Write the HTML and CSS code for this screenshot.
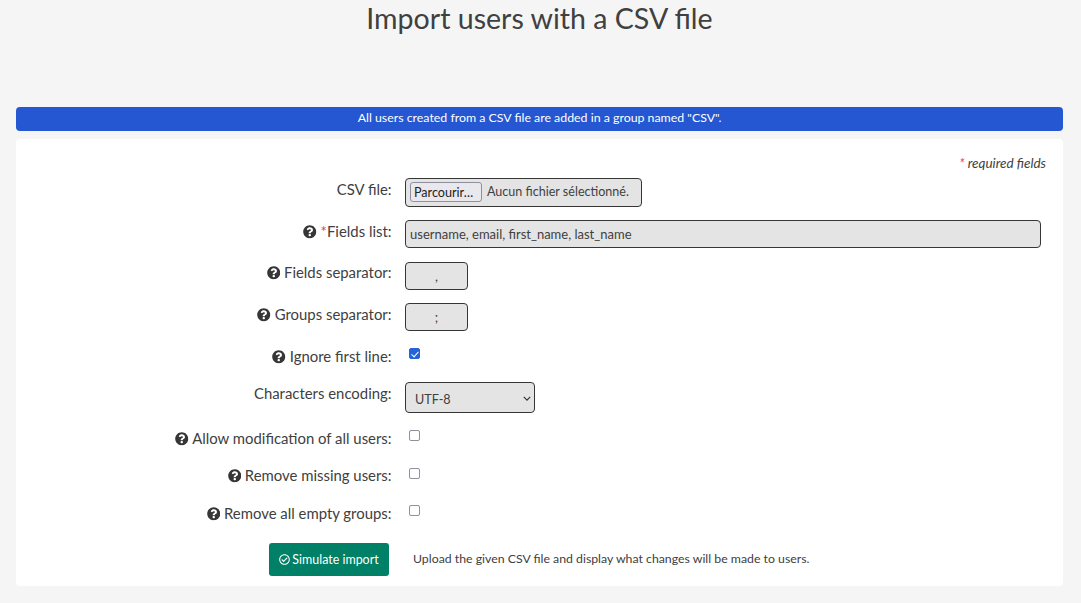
FILE: index.html
```html
<!DOCTYPE html>
<html lang="en">
<head>
<meta charset="utf-8">
<title>Import users with a CSV file</title>
<link rel="stylesheet" href="styles.css">
</head>
<body>
<svg class="sprite" width="0" height="0" aria-hidden="true">
  <symbol id="q" viewBox="0 0 512 512"><path fill="currentColor" d="M504 256c0 136.997-111.043 248-248 248S8 392.997 8 256C8 119.083 119.043 8 256 8s248 111.083 248 248zM262.655 90c-54.497 0-89.255 22.957-116.549 63.758-3.536 5.286-2.353 12.415 2.715 16.258l34.699 26.31c5.205 3.947 12.621 3.008 16.665-2.122 17.864-22.658 30.113-35.797 57.303-35.797 20.429 0 45.698 13.148 45.698 32.958 0 14.976-12.363 22.667-32.534 33.976C247.128 238.528 216 254.941 216 296v4c0 6.627 5.373 12 12 12h56c6.627 0 12-5.373 12-12v-1.333c0-28.462 83.186-29.647 83.186-106.667 0-58.002-60.165-102-116.531-102zM256 338c-25.365 0-46 20.635-46 46 0 25.364 20.635 46 46 46s46-20.636 46-46c0-25.365-20.635-46-46-46z"/></symbol>
</svg>
<h1 class="title">Import users with a CSV file</h1>
<div class="banner">All users created from a CSV file are added in a group named "CSV".</div>
<form class="panel">
  <p class="required"><span class="star">*</span> required fields</p>
  <div class="row row-file">
    <label class="label">CSV file:</label>
    <div class="file"><button type="button" class="file-btn">Parcourir…</button><span class="file-name">Aucun fichier sélectionné.</span></div>
  </div>
  <div class="row row-text">
    <label class="label"><svg class="help"><use href="#q"/></svg> <span class="star">*</span>Fields list:</label>
    <input class="input wide" type="text" value="username, email, first_name, last_name">
  </div>
  <div class="row row-fsep">
    <label class="label"><svg class="help"><use href="#q"/></svg> Fields separator:</label>
    <input class="input short" type="text" value=",">
  </div>
  <div class="row row-gsep">
    <label class="label"><svg class="help"><use href="#q"/></svg> Groups separator:</label>
    <input class="input short" type="text" value=";">
  </div>
  <div class="row first-check">
    <label class="label"><svg class="help"><use href="#q"/></svg> Ignore first line:</label>
    <input class="check" type="checkbox" checked>
  </div>
  <div class="row row-select">
    <label class="label">Characters encoding:</label>
    <div class="select-wrap">
      <select class="select"><option>UTF-8</option></select>
      <svg class="caret" viewBox="0 0 10 6"><path d="M1 1l4 4 4-4" fill="none" stroke="#333" stroke-width="1.5"/></svg>
    </div>
  </div>
  <div class="row c1">
    <label class="label"><svg class="help"><use href="#q"/></svg> Allow modification of all users:</label>
    <input class="check" type="checkbox">
  </div>
  <div class="row c2">
    <label class="label"><svg class="help"><use href="#q"/></svg> Remove missing users:</label>
    <input class="check" type="checkbox">
  </div>
  <div class="row c3">
    <label class="label"><svg class="help"><use href="#q"/></svg> Remove all empty groups:</label>
    <input class="check" type="checkbox">
  </div>
  <div class="row-submit">
    <button type="button" class="submit"><svg class="ok" viewBox="0 0 512 512"><path fill="currentColor" d="M256 8C119.033 8 8 119.033 8 256s111.033 248 248 248 248-111.033 248-248S392.967 8 256 8zm0 48c110.532 0 200 89.451 200 200 0 110.532-89.451 200-200 200-110.532 0-200-89.451-200-200 0-110.532 89.451-200 200-200m140.204 130.267l-22.536-22.718c-4.667-4.705-12.265-4.736-16.97-.068L215.346 303.697l-59.792-60.277c-4.667-4.705-12.265-4.736-16.97-.069l-22.719 22.536c-4.705 4.667-4.736 12.265-.068 16.971l90.781 91.516c4.667 4.705 12.265 4.736 16.97.068l172.589-171.204c4.704-4.668 4.734-12.266.067-16.971z"/></svg>Simulate import</button>
    <span class="hint">Upload the given CSV file and display what changes will be made to users.</span>
  </div>
</form>
</body>
</html>
```
FILE: styles.css
```css
* { box-sizing: border-box; }
html, body { margin: 0; padding: 0; }
body {
  background: #f5f5f5;
  color: #404040;
  font-family: Lato, "Liberation Sans", sans-serif;
  font-size: 15px;
  height: 603px;
  overflow: hidden;
  padding: 0 18px 0 16px;
}
.sprite { position: absolute; }
.title {
  margin: 0;
  height: 107px;
  text-align: center;
  font-size: 28.55px;
  line-height: 36px;
  font-weight: 400;
}
.banner {
  height: 24px;
  line-height: 22px;
  background: #2457d1;
  color: #fff;
  border-radius: 4px;
  text-align: center;
  font-size: 12.35px;
}
.panel {
  margin-top: 8px;
  background: #fff;
  border-radius: 4px;
  height: 447px;
  padding-top: 17px;
}
.required {
  margin: 0 17px 0 0;
  height: 22px;
  line-height: 15px;
  text-align: right;
  font-style: italic;
  font-size: 13.5px;
}
.star { color: #e0464b; }
.row { display: flex; align-items: flex-start; }
.label {
  width: 375.5px;
  text-align: right;
  flex: none;
  margin-right: 13.5px;
  line-height: 22px;
  font-size: 14.9px;
}
.help { width: 13.5px; height: 13.5px; vertical-align: -1.5px; color: #363636; }
.row-file { height: 42px; }
.row-text { height: 42px; }
.row-fsep { height: 41px; }
.row-fsep .label { line-height: 20px; }
.row-gsep { height: 41px; }
.first-check { height: 38px; }
.first-check .label { line-height: 24px; }
.row-select { height: 45px; }
.c1 { height: 38px; }
.c2 { height: 37px; }
.c2 .label { line-height: 20px; }
.c3 { height: 41px; }
.c1 .check, .c2 .check, .c3 .check { margin: 3px 0 0 4px; }
.first-check .check { margin: 4px 0 0 4px; }
.file {
  width: 237px;
  height: 29px;
  border: 1px solid #363636;
  border-radius: 4px;
  background: #e4e4e4;
  display: flex;
  align-items: flex-start;
  padding: 3px 0 0 4px;
  font-size: 12.55px;
}
.file-btn {
  font-family: inherit;
  font-size: 12.6px;
  height: 20px;
  width: 72px;
  padding: 0 0 0 3px;
  text-align: left;
  color: #222;
  background: #e9e9ed;
  border: 1px solid #8f8f9d;
  border-radius: 3px;
  margin-right: 5px;
}
.file-name { line-height: 20px; }
.input {
  height: 28px;
  border: 1px solid #363636;
  border-radius: 4px;
  background: #e4e4e4;
  color: #404040;
  font-family: inherit;
  font-size: 13px;
  padding: 0 4px 1px;
  outline: 0;
}
.wide { width: 636px; }
.short { width: 63px; text-align: center; }
.check {
  appearance: none;
  width: 11px;
  height: 11px;
  border: 1px solid #8f8f9d;
  border-radius: 2px;
  background: #fff;
  display: block;
}
.check:checked {
  background: #2563d8;
  border-color: #2563d8;
  position: relative;
}
.check:checked::after {
  content: "";
  position: absolute;
  left: 2.5px;
  top: .5px;
  width: 3px;
  height: 6px;
  border: solid #fff;
  border-width: 0 1.6px 1.6px 0;
  transform: rotate(42deg);
}
.select-wrap { position: relative; width: 130px; height: 31px; }
.select {
  appearance: none;
  width: 100%;
  height: 100%;
  border: 1px solid #363636;
  border-radius: 4px;
  background: #e4e4e4;
  color: #404040;
  font-family: inherit;
  font-size: 12.6px;
  padding: 3px 9px 0;
}
.caret {
  position: absolute;
  right: 4.5px;
  top: 14px;
  width: 8px;
  height: 5px;
  pointer-events: none;
}
.row-submit { display: flex; align-items: center; padding-left: 253px; height: 33px; }
.submit {
  width: 120px;
  height: 33px;
  background: #008066;
  color: #fff;
  border: 0;
  border-radius: 3px;
  font-family: inherit;
  font-size: 12.45px;
  padding: 0;
  margin-right: 24px;
}
.ok { width: 11px; height: 11px; vertical-align: -1px; margin-right: 2px; }
.hint { font-size: 12.3px; padding-bottom: 3px; }
```
